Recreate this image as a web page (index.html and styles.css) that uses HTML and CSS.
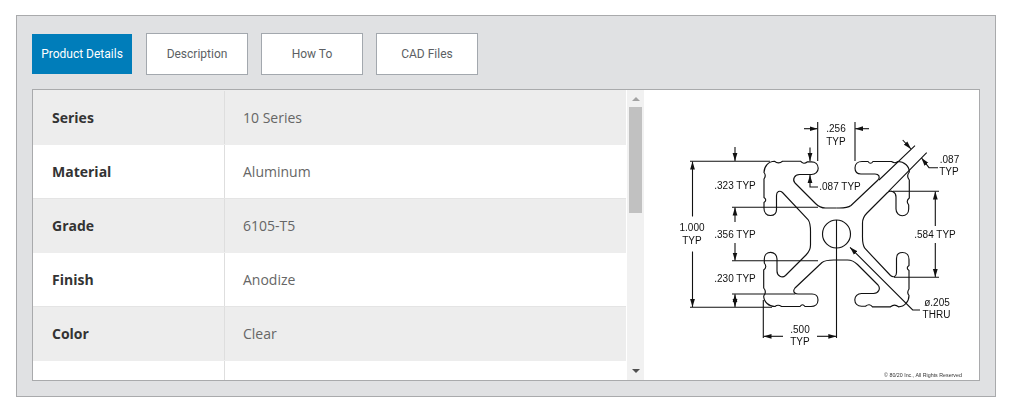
FILE: index.html
```html
<!DOCTYPE html>
<html lang="en">
<head>
<meta charset="utf-8">
<title>Product Details</title>
<link rel="stylesheet" href="styles.css">
</head>
<body>
<section class="box">
  <nav class="tabs">
    <a class="tab tab-active">Product Details</a>
    <a class="tab">Description</a>
    <a class="tab">How To</a>
    <a class="tab">CAD Files</a>
  </nav>
  <div class="panel">
    <div class="specs">
      <div class="row"><div class="label">Series</div><div class="value">10 Series</div></div>
      <div class="row"><div class="label">Material</div><div class="value">Aluminum</div></div>
      <div class="row"><div class="label">Grade</div><div class="value">6105-T5</div></div>
      <div class="row"><div class="label">Finish</div><div class="value">Anodize</div></div>
      <div class="row"><div class="label">Color</div><div class="value">Clear</div></div>
      <div class="row"><div class="label"></div><div class="value"></div></div>
    </div>
    <div class="scrollbar">
      <span class="arrow arrow-up"></span>
      <span class="track"><span class="thumb"></span></span>
      <span class="arrow arrow-down"></span>
    </div>
    <div class="drawing">
      <svg class="drawing-svg" viewBox="644 90 335 290" width="335" height="290" xmlns="http://www.w3.org/2000/svg">
        <defs>
          <marker id="a" viewBox="0 0 8 6" refX="8" refY="3" markerWidth="8" markerHeight="6" markerUnits="userSpaceOnUse" orient="auto-start-reverse">
            <path d="M0 .6L8 3L0 5.4z" class="arrowhead"/>
          </marker>
        </defs>
        <g class="profile">
          <path id="q" d="M836.5 208C842 208 847 208.5 851 205.5L878 180C880.5 177 879 174 875 174L861 174C857 174 855 171.5 855 168C855 164 858 161.5 862 161.5L868 161.5Q870.5 165 873 161.5L891.5 161.5Q895 164 898 161.5C904 161.5 909.3 166 909.3 172Q906 176 909.3 180L909.3 198Q905.5 201 908.7 205L908.7 209C908.7 213 906 215.7 902.3 215.7C899 215.7 896 213 896 209L896 197C896 192 891 189.5 887.5 192.5L867 213C864 216 862.5 219 862.5 223L862.5 234"/>
          <use href="#q" transform="rotate(90 836.5 234)"/>
          <use href="#q" transform="rotate(180 836.5 234)"/>
          <use href="#q" transform="rotate(270 836.5 234)"/>
          <circle cx="836.5" cy="234" r="14"/>
        </g>
        <g class="dims">
          <path d="M817.7 122V161M855 122V161"/>
          <path d="M804 128.7H817.5" marker-end="url(#a)"/>
          <path d="M869 128.7H855.2" marker-end="url(#a)"/>
          <path d="M810 147.5V161" marker-end="url(#a)"/>
          <path d="M818 187H810V175" marker-end="url(#a)"/>
          <path d="M690 161.3H770M690 307.3H772"/>
          <path d="M692.5 216.5V161.5" marker-end="url(#a)"/>
          <path d="M692.5 251.5V307" marker-end="url(#a)"/>
          <path d="M735 147V161" marker-end="url(#a)"/>
          <path d="M732 207.3H818M732 260.7H818M732 294H795"/>
          <path d="M735 222V207.5" marker-end="url(#a)"/>
          <path d="M735 243V260.5" marker-end="url(#a)"/>
          <path d="M735 300.5L735 294.2" marker-end="url(#a)"/>
          <path d="M735 300L735 307" marker-end="url(#a)"/>
          <path d="M763.3 300V338"/>
          <path d="M783 336.3H763.5" marker-end="url(#a)"/>
          <path d="M817 336.3H836.3" marker-end="url(#a)"/>
          <path d="M836.5 220V338"/>
          <path d="M893 191.3H939M894 277.3H939"/>
          <path d="M935.3 226V191.5" marker-end="url(#a)"/>
          <path d="M935.3 243V277" marker-end="url(#a)"/>
          <path d="M915 145.7L879 180M926.7 152.7L888.3 191.7"/>
          <path d="M902.7 140L911 149" marker-end="url(#a)"/>
          <path d="M938 167.7H929L921.5 158" marker-end="url(#a)"/>
          <path d="M920 310H912.7L850 247.3" marker-end="url(#a)"/>
        </g>
        <g class="dim-text">
          <text x="836" y="132">.256</text>
          <text x="836" y="145">TYP</text>
          <text x="840" y="190">.087 TYP</text>
          <text x="735" y="189">.323 TYP</text>
          <text x="735" y="238">.356 TYP</text>
          <text x="735" y="282">.230 TYP</text>
          <text x="692" y="231">1.000</text>
          <text x="692" y="244">TYP</text>
          <text x="800" y="333">.500</text>
          <text x="800" y="345">TYP</text>
          <text x="935" y="238">.584 TYP</text>
          <text x="949.5" y="163">.087</text>
          <text x="949" y="175">TYP</text>
          <text x="937" y="306">ø.205</text>
          <text x="936.5" y="318">THRU</text>
          <text class="copyright" x="923" y="376.5">© 80/20 Inc., All Rights Reserved</text>
        </g>
      </svg>
    </div>
  </div>
</section>
</body>
</html>
```

FILE: styles.css
```css
* { box-sizing: border-box; }

html, body { margin: 0; background: #fff; }

body { padding: 15px 14px 20px 16px; }

.box {
  height: 382px;
  width: 980px;
  background: #e0e1e3;
  border: 1px solid #a9aaac;
  padding: 17px 15px 15px;
}

.tabs {
  display: flex;
  gap: 13px;
  height: 42px;
  margin-bottom: 14px;
}

.tab {
  display: flex;
  align-items: center;
  justify-content: center;
  width: 102px;
  height: 42px;
  padding-bottom: 1px;
  background: #fff;
  border: 1px solid #a3a8ae;
  color: #5c5f64;
  font: 400 12px "Roboto", sans-serif;
}

.tab-active {
  width: 100px;
  height: 40px;
  margin: 1px 1px 1px 0;
  background: #007dba;
  border: 0;
  color: #fff;
}

.panel {
  display: flex;
  height: 292px;
  background: #fff;
  border: 1px solid #a9aaac;
  overflow: hidden;
}

.specs {
  width: 593px;
  flex: none;
  padding-top: 1px;
  overflow: hidden;
  background: linear-gradient(#ededed 1px, transparent 1px);
}

.row {
  display: grid;
  grid-template-columns: 192px 1fr;
  height: 54px;
  border-bottom: 1px solid #e4e4e4;
  font: 14px/53px "Open Sans", sans-serif;
}

.row:nth-child(odd) {
  background: #ededed;
  border-bottom-color: #ededed;
}

.label {
  padding-left: 19px;
  border-right: 1px solid #dedede;
  color: #333;
  font-weight: 700;
}

.value {
  padding-left: 18px;
  color: #666;
}

.scrollbar {
  flex: none;
  width: 17px;
  margin-left: 1px;
  display: flex;
  flex-direction: column;
  align-items: center;
  background: #f1f1f1;
}

.arrow {
  flex: none;
  width: 0;
  height: 0;
  border-left: 4px solid transparent;
  border-right: 4px solid transparent;
}

.arrow-up {
  margin-top: 7px;
  border-bottom: 4px solid #a3a3a3;
}

.arrow-down {
  margin-bottom: 7px;
  border-top: 4px solid #505050;
}

.track {
  flex: 1;
  width: 13px;
  padding-top: 6px;
}

.thumb {
  display: block;
  width: 13px;
  height: 106px;
  background: #c1c1c1;
}

.drawing {
  flex: none;
  width: 335px;
  background: #fff;
}

.drawing-svg {
  display: block;
  filter: blur(0.3px);
}

.profile path, .profile use, .profile circle {
  fill: none;
  stroke: #111;
  stroke-width: 1.15;
}

.dims path {
  fill: none;
  stroke: #111;
  stroke-width: 1.1;
}

.dims .arrowhead, .arrowhead {
  fill: #111;
  stroke: none;
}

.dim-text text {
  fill: #111;
  font: 10px "Liberation Sans", Arial, sans-serif;
  text-anchor: middle;
}

.dim-text .copyright {
  font-size: 5.3px;
  fill: #333;
}
```
